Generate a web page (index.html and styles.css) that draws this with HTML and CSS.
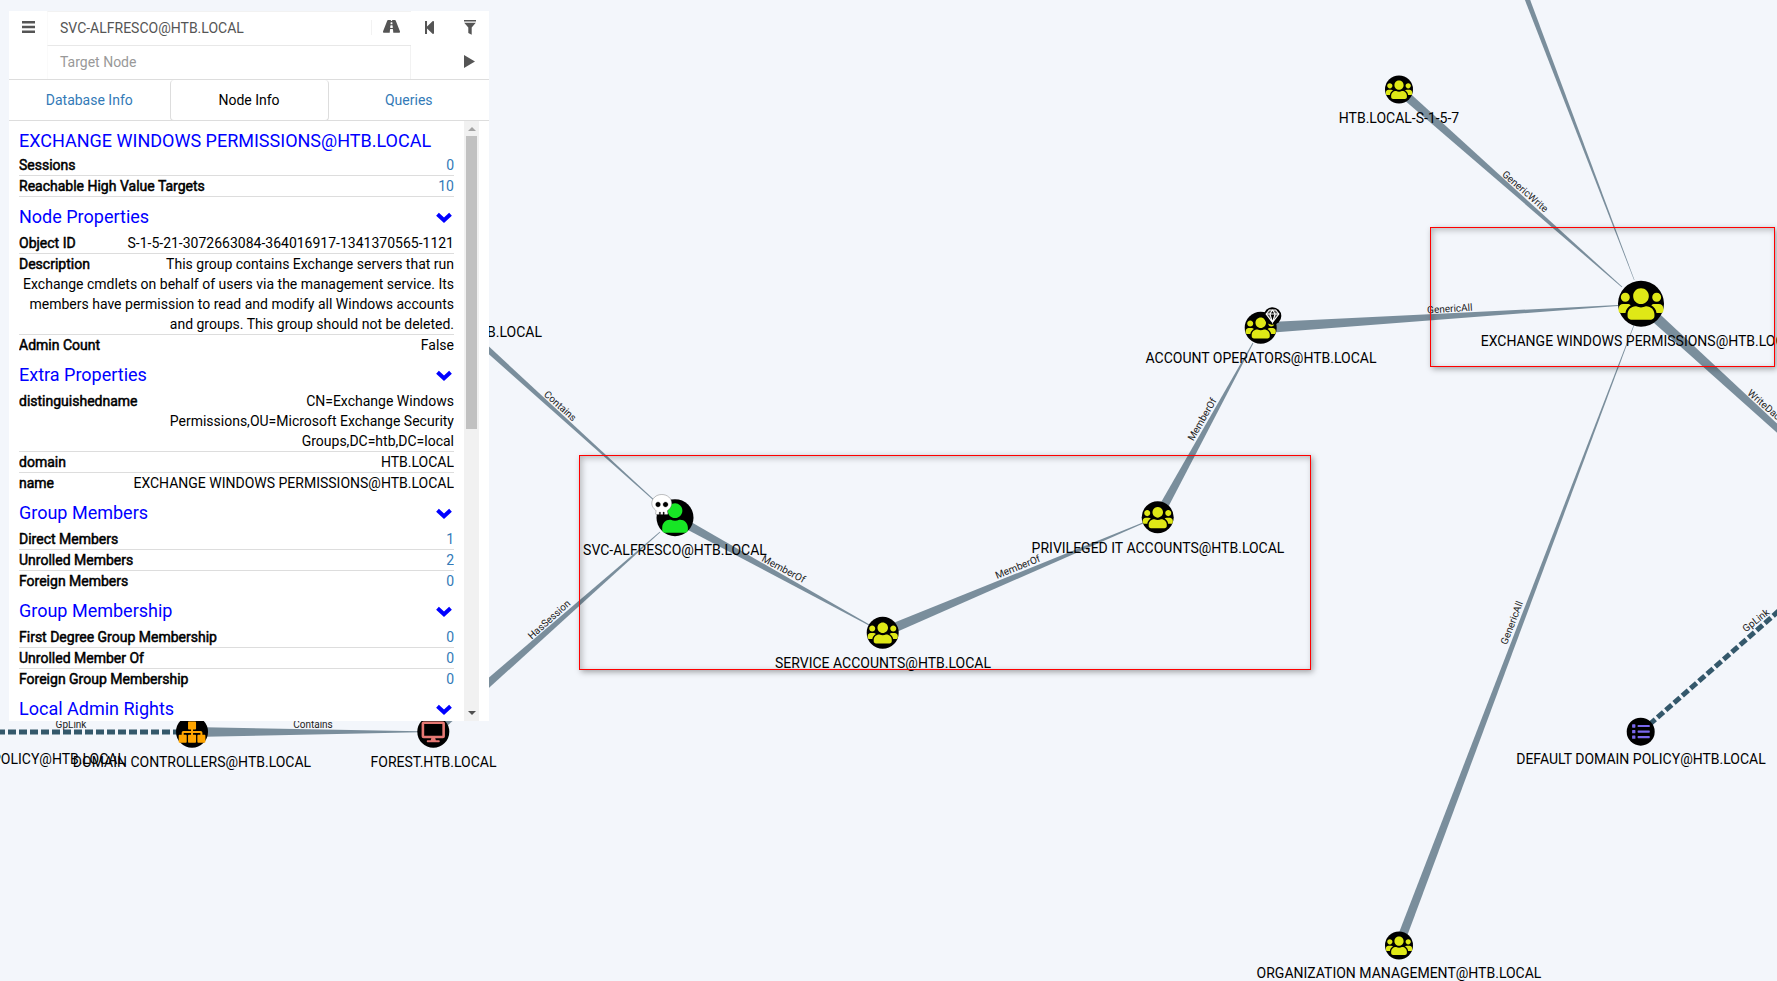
FILE: index.html
```html
<!DOCTYPE html>
<html lang="en">
<head>
  <meta charset="UTF-8" />
  <title>BloodHound</title>
  <link rel="stylesheet" href="styles.css">
</head>
<body>

  <!-- graph canvas -->
  <svg class="graph" width="1777" height="981" viewBox="0 0 1777 981">
    <defs>
      <path id="usersIcon" d="M96 224c35.3 0 64-28.7 64-64s-28.7-64-64-64-64 28.7-64 64 28.7 64 64 64zm448 0c35.3 0 64-28.7 64-64s-28.7-64-64-64-64 28.7-64 64 28.7 64 64 64zm32 32h-64c-17.6 0-33.5 7.1-45.1 18.6 40.3 22.1 68.9 62 75.1 109.4h66c17.7 0 32-14.3 32-32v-32c0-35.3-28.7-64-64-64zm-256 0c61.9 0 112-50.1 112-112S381.9 32 320 32 208 82.1 208 144s50.1 112 112 112zm76.8 32h-8.3c-20.8 10-43.9 16-68.5 16s-47.6-6-68.5-16h-8.3C179.6 288 128 339.6 128 403.2V432c0 26.5 21.5 48 48 48h288c26.5 0 48-21.5 48-48v-28.8c0-63.6-51.6-115.2-115.2-115.2zm-223.7-13.4C161.5 263.1 145.6 256 128 256H64c-35.3 0-64 28.7-64 64v32c0 17.7 14.3 32 32 32h65.9c6.3-47.4 34.9-87.3 75.2-109.4z"/>
    </defs>

    <g class="edges">
      <polygon points="442,303 438,309 657,503.4 657.5,502.8"/>
      <polygon points="436.6,735.5 430,727.9 659.7,531.7 660.3,532.3"/>
      <polygon points="677.2,514 672.8,521.9 870.8,626.4 871.2,625.6"/>
      <polygon points="884.6,637.3 880.8,628.1 1142.8,522.6 1143.2,523.4"/>
      <polygon points="1161.7,519.5 1153.7,515.1 1252.6,342.8 1253.4,343.2"/>
      <polygon points="1261.4,333.5 1260.6,322.5 1618,305.1 1618,305.9"/>
      <polygon points="1402,86.1 1396,92.9 1621.7,287.3 1622.3,286.7"/>
      <polygon points="1521,-10 1526.5,-10 1634.5,280 1634,280"/>
      <polygon points="1637.3,308 1644.7,300 1792.2,437.7 1787.8,442.3"/>
      <polygon points="1403.2,946.6 1394.8,943.4 1633.7,325 1634.3,325"/>
      <polygon points="192,727 192,737 420,732.2 420,731.2"/>
    </g>
    <path class="edge-dash" d="M1641 732L1790 601"/>
    <path class="edge-dash" d="M192 732H-4"/>

    <g class="edge-labels">
      <text transform="translate(558 408.5) rotate(42)">Contains</text>
      <text transform="translate(551.5 622) rotate(-42)">HasSession</text>
      <text transform="translate(782 572) rotate(28)">MemberOf</text>
      <text transform="translate(1019 570) rotate(-22)">MemberOf</text>
      <text transform="translate(1205 421) rotate(-60)">MemberOf</text>
      <text transform="translate(1450 312) rotate(-3.5)">GenericAll</text>
      <text transform="translate(1523 194) rotate(41)">GenericWrite</text>
      <text transform="translate(1515 624) rotate(-69)">GenericAll</text>
      <text transform="translate(1758 623) rotate(-38)">GpLink</text>
      <text transform="translate(1763 408) rotate(41)">WriteDacl</text>
      <text transform="translate(71 727.5)">GpLink</text>
      <text transform="translate(313 727.5)">Contains</text>
    </g>

    <!-- nodes -->
    <g class="node group" transform="translate(1399 89.5)">
      <circle r="14"/>
      <use href="#usersIcon" transform="translate(-13.1 -10.2) scale(.041)"/>
    </g>
    <g class="node group" transform="translate(1641 303.7)">
      <circle r="23"/>
      <use href="#usersIcon" transform="translate(-22.4 -17.6) scale(.07)"/>
    </g>
    <g class="node group" transform="translate(1260.7 327.7)">
      <circle r="16"/>
      <use href="#usersIcon" transform="translate(-15 -11.7) scale(.047)"/>
    </g>
    <g class="node group" transform="translate(1157.7 517.3)">
      <circle r="16"/>
      <use href="#usersIcon" transform="translate(-15 -11.7) scale(.047)"/>
    </g>
    <g class="node group" transform="translate(882.7 632.7)">
      <circle r="16"/>
      <use href="#usersIcon" transform="translate(-15 -11.7) scale(.047)"/>
    </g>
    <g class="node group" transform="translate(1399 945.5)">
      <circle r="14"/>
      <use href="#usersIcon" transform="translate(-13.1 -10.2) scale(.041)"/>
    </g>
    <g class="node user" transform="translate(675 517.7)">
      <circle r="18.5"/>
      <path transform="translate(-12.8 -14.4) scale(.0573)" d="M224 256c70.7 0 128-57.3 128-128S294.7 0 224 0 96 57.3 96 128s57.3 128 128 128zm89.6 32h-16.7c-22.2 10.2-46.9 16-72.9 16s-50.6-5.8-72.9-16h-16.7C60.2 288 0 348.2 0 422.4V464c0 26.5 21.5 48 48 48h352c26.5 0 48-21.5 48-48v-41.6c0-74.2-60.2-134.4-134.4-134.4z"/>
    </g>
    <g class="node policy" transform="translate(1640.7 731.7)">
      <circle r="14"/>
      <path transform="translate(-8.6 -9) scale(.0345)" d="M80 368H16a16 16 0 0 0-16 16v64a16 16 0 0 0 16 16h64a16 16 0 0 0 16-16v-64a16 16 0 0 0-16-16zm0-320H16A16 16 0 0 0 0 64v64a16 16 0 0 0 16 16h64a16 16 0 0 0 16-16V64a16 16 0 0 0-16-16zm0 160H16a16 16 0 0 0-16 16v64a16 16 0 0 0 16 16h64a16 16 0 0 0 16-16v-64a16 16 0 0 0-16-16zm416 176H176a16 16 0 0 0-16 16v32a16 16 0 0 0 16 16h320a16 16 0 0 0 16-16v-32a16 16 0 0 0-16-16zm0-320H176a16 16 0 0 0-16 16v32a16 16 0 0 0 16 16h320a16 16 0 0 0 16-16V80a16 16 0 0 0-16-16zm0 160H176a16 16 0 0 0-16 16v32a16 16 0 0 0 16 16h320a16 16 0 0 0 16-16v-32a16 16 0 0 0-16-16z"/>
    </g>
    <g class="node ou" transform="translate(192 731.7)">
      <circle r="16"/>
      <path transform="translate(-13.3 -10.3) scale(.0417)" d="M616 320h-48v-48c0-22.06-17.94-40-40-40H344v-40h48c13.25 0 24-10.75 24-24V24c0-13.25-10.75-24-24-24H248c-13.25 0-24 10.75-24 24v144c0 13.25 10.75 24 24 24h48v40H112c-22.06 0-40 17.94-40 40v48H24c-13.25 0-24 10.75-24 24v144c0 13.25 10.75 24 24 24h144c13.25 0 24-10.75 24-24V344c0-13.25-10.75-24-24-24h-48v-40h176v40h-48c-13.25 0-24 10.75-24 24v144c0 13.25 10.75 24 24 24h144c13.25 0 24-10.75 24-24V344c0-13.25-10.75-24-24-24h-48v-40h176v40h-48c-13.25 0-24 10.75-24 24v144c0 13.25 10.75 24 24 24h144c13.25 0 24-10.75 24-24V344c0-13.25-10.75-24-24-24z"/>
    </g>
    <g class="node computer" transform="translate(433.3 731.7)">
      <circle r="16"/>
      <path transform="translate(-11.7 -10.3) scale(.0405)" d="M528 0H48C21.5 0 0 21.5 0 48v320c0 26.5 21.5 48 48 48h192l-16 48h-72c-13.3 0-24 10.7-24 24s10.7 24 24 24h272c13.3 0 24-10.7 24-24s-10.7-24-24-24h-72l-16-48h192c26.5 0 48-21.5 48-48V48c0-26.5-21.5-48-48-48zm-16 352H64V64h448v288z"/>
    </g>

    <!-- owned / high value markers -->
    <g class="skull" transform="translate(651.8 494.5) scale(.039)">
      <circle cx="160" cy="256" r="70"/>
      <circle cx="352" cy="256" r="70"/>
      <rect x="180" y="430" width="150" height="80"/>
      <path d="M256 0C114.6 0 0 100.3 0 224c0 70.1 36.9 132.6 94.5 173.7 9.6 6.9 15.2 18.1 13.5 29.9l-9.4 66.2c-1.4 9.6 6 18.2 15.7 18.2H192v-56c0-4.4 3.6-8 8-8h16c4.4 0 8 3.6 8 8v56h64v-56c0-4.4 3.6-8 8-8h16c4.4 0 8 3.6 8 8v56h77.7c9.7 0 17.1-8.6 15.7-18.2l-9.4-66.2c-1.7-11.7 3.8-23 13.5-29.9C475.1 356.6 512 294.1 512 224 512 100.3 397.4 0 256 0zm-96 320c-35.3 0-64-28.7-64-64s28.7-64 64-64 64 28.7 64 64-28.7 64-64 64zm192 0c-35.3 0-64-28.7-64-64s28.7-64 64-64 64 28.7 64 64-28.7 64-64 64z"/>
    </g>
    <g class="gem" transform="translate(1272.5 316)">
      <circle r="8.8"/>
      <path d="M-6.4 -2L-3.2 -6H3.2L6.4 -2L0 6.4ZM-6.4 -2H6.4M-2.6 -2L0 6.4L2.6 -2L0 -6Z"/>
    </g>

    <g class="node-labels">
      <text x="542" y="337" class="end">HTB.LOCAL</text>
      <text x="1399" y="123">HTB.LOCAL-S-1-5-7</text>
      <text x="1261" y="363">ACCOUNT OPERATORS@HTB.LOCAL</text>
      <text x="1641" y="346">EXCHANGE WINDOWS PERMISSIONS@HTB.LOCAL</text>
      <text x="675" y="555">SVC-ALFRESCO@HTB.LOCAL</text>
      <text x="1158" y="553">PRIVILEGED IT ACCOUNTS@HTB.LOCAL</text>
      <text x="883" y="668">SERVICE ACCOUNTS@HTB.LOCAL</text>
      <text x="192" y="767">DOMAIN CONTROLLERS@HTB.LOCAL</text>
      <text x="433.5" y="767">FOREST.HTB.LOCAL</text>
      <text x="125" y="764" class="end">DEFAULT DOMAIN POLICY@HTB.LOCAL</text>
      <text x="1641" y="764">DEFAULT DOMAIN POLICY@HTB.LOCAL</text>
      <text x="1399" y="978">ORGANIZATION MANAGEMENT@HTB.LOCAL</text>
    </g>
  </svg>

  <!-- red annotation boxes -->
  <div class="callout callout-path"></div>
  <div class="callout callout-target"></div>

  <!-- floating search + info panel -->
  <div class="panel">
    <div class="search">
      <button class="menu-btn" type="button">
        <svg width="13" height="12" viewBox="0 0 13 12"><path d="M0 0h13v2.4H0zM0 4.8h13v2.4H0zM0 9.6h13V12H0z"/></svg>
      </button>
      <div class="fields">
        <div class="field field-start">
          <span class="field-text">SVC-ALFRESCO@HTB.LOCAL</span>
          <span class="tool tool-road">
            <svg width="17" height="15" viewBox="0 0 576 448" preserveAspectRatio="none"><path transform="translate(0 -64)" fill-rule="evenodd" d="M573.19 402.67l-139.79-320C428.43 71.29 417.6 64 405.68 64h-97.59l2.45 23.16c.5 4.72-3.21 8.84-7.96 8.84h-29.16c-4.75 0-8.46-4.12-7.96-8.84L267.91 64h-97.59c-11.93 0-22.76 7.29-27.73 18.67L2.8 402.67C-6.45 423.86 8.31 448 30.54 448h196.84l10.31-97.68c.86-8.14 7.72-14.32 15.91-14.32h68.8c8.19 0 15.05 6.18 15.91 14.32L348.62 448h196.84c22.23 0 36.99-24.14 27.73-45.33zM260.4 135.16a8 8 0 0 1 7.96-7.16h39.29c4.09 0 7.53 3.09 7.96 7.16l4.6 43.58c.75 7.09-4.81 13.26-11.93 13.26h-40.54c-7.13 0-12.68-6.17-11.93-13.26l4.59-43.58zM315.64 304h-55.29c-9.5 0-16.91-8.23-15.91-17.68l5.07-48c.86-8.14 7.72-14.32 15.91-14.32h45.15c8.19 0 15.05 6.18 15.91 14.32l5.07 48c1 9.45-6.41 17.68-15.91 17.68z"/></svg>
          </span>
          <span class="tool tool-step">
            <svg width="9" height="13" viewBox="64 32 320 448" preserveAspectRatio="none"><path d="M64 468V44c0-6.6 5.4-12 12-12h48c6.6 0 12 5.4 12 12v176.4l195.5-181C352.1 22.3 384 36.6 384 64v384c0 27.4-31.9 41.7-52.5 24.6L136 292.7V468c0 6.6-5.4 12-12 12H76c-6.6 0-12-5.4-12-12z"/></svg>
          </span>
          <span class="tool tool-filter">
            <svg width="12" height="15" viewBox="0 0 12 15"><path d="M0 0h12v1.6H0zM.2 2.8h11.6L7.7 7.6v7.2L4.3 13V7.6z"/></svg>
          </span>
        </div>
        <div class="field field-end">
          <span class="field-text placeholder">Target Node</span>
          <span class="tool tool-play">
            <svg width="11" height="13" viewBox="0 0 11 13"><path d="M0 0l11 6.5L0 13z"/></svg>
          </span>
        </div>
      </div>
    </div>

    <div class="tabs">
      <a class="tab">Database Info</a>
      <a class="tab active">Node Info</a>
      <a class="tab">Queries</a>
    </div>

    <div class="tab-body">
      <div class="info">
        <h4 class="title">EXCHANGE WINDOWS PERMISSIONS@HTB.LOCAL</h4>
        <dl class="rows">
          <div class="row"><dt>Sessions</dt><dd class="num">0</dd></div>
          <div class="row"><dt>Reachable High Value Targets</dt><dd class="num">10</dd></div>
        </dl>

        <div class="section-head">Node Properties <svg class="chev" width="16" height="11" viewBox="0 0 16 11"><path d="M1.5 2.2L8 8.2l6.5-6"/></svg></div>
        <dl class="rows">
          <div class="row"><dt>Object ID</dt><dd>S-1-5-21-3072663084-364016917-1341370565-1121</dd></div>
          <div class="row"><dt>Description</dt><dd>This group contains Exchange servers that run Exchange cmdlets on behalf of users via the management service. Its members have permission to read and modify all Windows accounts and groups. This group should not be deleted.</dd></div>
          <div class="row"><dt>Admin Count</dt><dd>False</dd></div>
        </dl>

        <div class="section-head">Extra Properties <svg class="chev" width="16" height="11" viewBox="0 0 16 11"><path d="M1.5 2.2L8 8.2l6.5-6"/></svg></div>
        <dl class="rows">
          <div class="row"><dt>distinguishedname</dt><dd>CN=Exchange Windows Permissions,OU=Microsoft Exchange Security Groups,DC=htb,DC=local</dd></div>
          <div class="row"><dt>domain</dt><dd>HTB.LOCAL</dd></div>
          <div class="row"><dt>name</dt><dd>EXCHANGE WINDOWS PERMISSIONS@HTB.LOCAL</dd></div>
        </dl>

        <div class="section-head">Group Members <svg class="chev" width="16" height="11" viewBox="0 0 16 11"><path d="M1.5 2.2L8 8.2l6.5-6"/></svg></div>
        <dl class="rows">
          <div class="row"><dt>Direct Members</dt><dd class="num">1</dd></div>
          <div class="row"><dt>Unrolled Members</dt><dd class="num">2</dd></div>
          <div class="row"><dt>Foreign Members</dt><dd class="num">0</dd></div>
        </dl>

        <div class="section-head">Group Membership <svg class="chev" width="16" height="11" viewBox="0 0 16 11"><path d="M1.5 2.2L8 8.2l6.5-6"/></svg></div>
        <dl class="rows">
          <div class="row"><dt>First Degree Group Membership</dt><dd class="num">0</dd></div>
          <div class="row"><dt>Unrolled Member Of</dt><dd class="num">0</dd></div>
          <div class="row"><dt>Foreign Group Membership</dt><dd class="num">0</dd></div>
        </dl>

        <div class="section-head">Local Admin Rights <svg class="chev" width="16" height="11" viewBox="0 0 16 11"><path d="M1.5 2.2L8 8.2l6.5-6"/></svg></div>
      </div>

      <div class="scrollbar">
        <span class="arrow arrow-up"></span>
        <span class="thumb"></span>
        <span class="arrow arrow-down"></span>
      </div>
    </div>
  </div>

</body>
</html>
```

FILE: styles.css
```css
html, body {
  margin: 0;
  height: 100%;
}
body {
  position: relative;
  width: 1777px;
  height: 981px;
  overflow: hidden;
  background: #f3f6fb;
  font-family: Roboto, sans-serif;
  font-size: 14px;
  line-height: 20px;
  color: #000;
}

/* graph */
.graph {
  position: absolute;
  left: 0;
  top: 0;
}
.edges polygon { fill: #7a8e9c; }
.edge-dash {
  fill: none;
  stroke: #34586b;
  stroke-width: 5;
  stroke-dasharray: 8 3;
}
.edge-labels text {
  font-size: 10px;
  text-anchor: middle;
  fill: #222;
}
.node circle { fill: #000; }
.node.group use { fill: #dfe816; }
.node.user path { fill: #17e625; }
.node.policy path { fill: #7b68ee; }
.node.ou path { fill: #ffa500; }
.node.computer path { fill: #e67873; }
.skull circle, .skull rect { fill: #000; }
.skull path {
  fill: #fff;
  stroke: #333;
  stroke-width: 8;
}
.gem circle { fill: #000; }
.gem path {
  fill: rgba(255, 255, 255, .35);
  stroke: #fff;
  stroke-width: 1.1;
}
.node-labels text {
  font-size: 14px;
  text-anchor: middle;
  fill: #000;
}
.node-labels text.end { text-anchor: end; }

/* red annotation boxes */
.callout {
  position: absolute;
  box-sizing: border-box;
  border: 1.5px solid #f00;
  box-shadow: 2px 2px 6px rgba(0, 0, 0, .35), inset 2px 2px 6px rgba(0, 0, 0, .25);
}
.callout-path {
  left: 579px;
  top: 455px;
  width: 732px;
  height: 215px;
}
.callout-target {
  left: 1430px;
  top: 227px;
  width: 345px;
  height: 140px;
}

/* panel */
.panel {
  position: absolute;
  left: 9px;
  top: 11px;
  width: 480px;
  height: 710px;
  display: flex;
  flex-direction: column;
  background: #fff;
}
.search {
  display: flex;
  height: 68px;
  border-bottom: 1px solid #ddd;
}
.menu-btn {
  width: 39px;
  height: 32px;
  padding: 0;
  border: none;
  background: none;
}
.menu-btn svg {
  fill: #555;
  display: block;
  margin-left: 13px;
}
.fields {
  flex: 1;
  display: flex;
  flex-direction: column;
  margin-left: -1px;
}
.field {
  flex: 1;
  display: flex;
  align-items: center;
  padding-bottom: 2px;
  margin-right: 78px;
  border-left: 1px solid #fafafa;
}
.field-start {
  border-top: 1px solid #f2f2f2;
  border-bottom: 1px solid #e8e8e8;
}
.field-end { border-right: 1px solid #f2f2f2; }
.field-text {
  flex: 1;
  padding-left: 12px;
  color: #555;
}
.placeholder { color: #999; }
.tool {
  width: 39px;
  display: flex;
  justify-content: center;
  flex-shrink: 0;
}
.tool svg {
  fill: #555;
  display: block;
}
.tool-road { box-shadow: -1px 0 0 #f2f2f2; }
.tool-step svg { margin-right: 2px; }
.tool-filter { margin-right: -78px; }
.tool-play { margin-right: -79px; }
.tabs {
  display: flex;
  height: 40px;
  border-bottom: 1px solid #ddd;
}
.tab {
  flex: 1 1 0;
  display: flex;
  align-items: center;
  justify-content: center;
  color: #337ab7;
}
.tab.active {
  flex: 0 0 159px;
  box-sizing: border-box;
  color: #000;
  border: 1px solid #ddd;
  border-top: none;
  border-radius: 4px;
  height: 41px;
}
.tab-body {
  flex: 1;
  display: flex;
  min-height: 0;
  overflow: hidden;
}
.info {
  flex: 1;
  padding: 0 10px;
  overflow: hidden;
  min-width: 0;
}
.title {
  margin: 10px 0 4px;
  font-size: 18px;
  font-weight: 400;
  line-height: 20px;
  color: #00f;
}
.rows { margin: 0; }
.row {
  border-bottom: 1px solid #ddd;
  overflow: hidden;
}
.rows .row:last-child { border-bottom: none; }
.rows:first-of-type .row:last-child { border-bottom: 1px solid #ddd; }
/* the original's bold is a smeared regular, widths stay those of regular */
.row dt {
  float: left;
  font-weight: 400;
  -webkit-text-stroke: .5px #000;
  white-space: nowrap;
  margin-right: 20px;
}
.row dd {
  margin: 0;
  text-align: right;
}
.row dd.num { color: #337ab7; }
.section-head {
  display: flex;
  justify-content: space-between;
  align-items: center;
  margin: 10px 0 6px;
  font-size: 18px;
  line-height: 20px;
  color: #00f;
}
.chev path {
  fill: none;
  stroke: #00f;
  stroke-width: 4;
}
.chev { margin-right: 2px; }
.scrollbar {
  position: relative;
  width: 25px;
  flex-shrink: 0;
  box-sizing: border-box;
  background: #f1f1f1;
  border-right: 10px solid #fff;
  display: flex;
  flex-direction: column;
  align-items: center;
}
.thumb {
  width: 11px;
  height: 293px;
  margin-top: 15px;
  background: #c1c1c1;
}
.arrow {
  position: absolute;
  border-left: 4px solid transparent;
  border-right: 4px solid transparent;
}
.arrow-up { top: 6px; border-bottom: 4px solid #a3a3a3; }
.arrow-down { bottom: 6px; border-top: 4px solid #505050; }
```
